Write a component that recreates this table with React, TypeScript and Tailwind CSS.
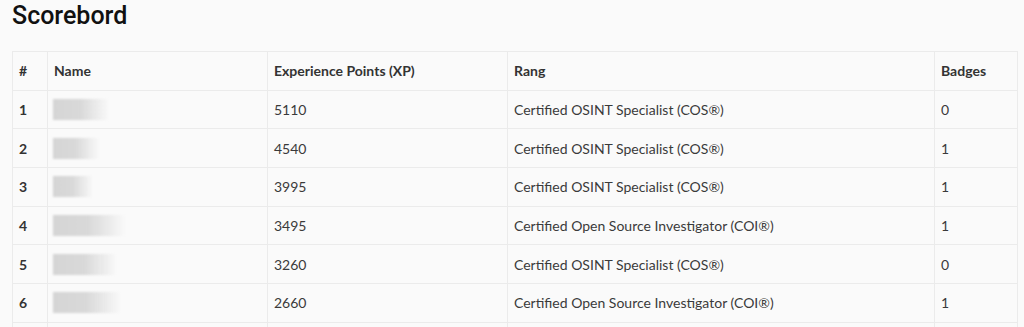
const rows = [
  { pos: 1, blur: 56, xp: 5110, rang: 'Certified OSINT Specialist (COS®)', badges: 0 },
  { pos: 2, blur: 46, xp: 4540, rang: 'Certified OSINT Specialist (COS®)', badges: 1 },
  { pos: 3, blur: 40, xp: 3995, rang: 'Certified OSINT Specialist (COS®)', badges: 1 },
  { pos: 4, blur: 72, xp: 3495, rang: 'Certified Open Source Investigator (COI®)', badges: 1 },
  { pos: 5, blur: 64, xp: 3260, rang: 'Certified OSINT Specialist (COS®)', badges: 0 },
  { pos: 6, blur: 68, xp: 2660, rang: 'Certified Open Source Investigator (COI®)', badges: 1 },
  { pos: 7, blur: 50, xp: 2450, rang: 'Certified OSINT Specialist (COS®)', badges: 0 },
];

function BlurredName({ width }: { width: number }) {
  return (
    <div
      className="h-[21px] bg-gradient-to-r from-[#d5d5d5] via-[#d9d9d9] to-transparent blur-[1px]"
      style={{ width }}
    />
  );
}

export default function App() {
  return (
    <div className="min-h-screen bg-[#fafafa] pl-3 pt-[1px]">
      <h1 className="text-[25px] leading-[30px] font-medium text-[#111] font-['Roboto',sans-serif]">
        Scorebord
      </h1>
      <table className="mt-[20px] w-[1006px] border-collapse text-[14px] text-[#3a3a3a] font-['Lato',sans-serif]">
        <thead>
          <tr className="h-[38.7px]">
            <th className="w-[35px] border border-[#ebebeb] px-[6px] text-left font-bold text-[#333]">#</th>
            <th className="w-[220px] border border-[#ebebeb] px-[6px] text-left font-bold text-[#333]">Name</th>
            <th className="w-[240px] border border-[#ebebeb] px-[6px] text-left font-bold text-[#333]">Experience Points (XP)</th>
            <th className="w-[427px] border border-[#ebebeb] px-[6px] text-left font-bold text-[#333]">Rang</th>
            <th className="border border-[#ebebeb] px-[6px] text-left font-bold text-[#333]">Badges</th>
          </tr>
        </thead>
        <tbody>
          {rows.map((r) => (
            <tr key={r.pos} className="h-[38.7px]">
              <td className="border border-[#ebebeb] px-[6px] font-bold text-[#333]">{r.pos}</td>
              <td className="border border-[#ebebeb] px-[5px]">
                <BlurredName width={r.blur} />
              </td>
              <td className="border border-[#ebebeb] px-[6px]">{r.xp}</td>
              <td className="border border-[#ebebeb] px-[6px]">{r.rang}</td>
              <td className="border border-[#ebebeb] px-[6px]">{r.badges}</td>
            </tr>
          ))}
        </tbody>
      </table>
    </div>
  );
}
